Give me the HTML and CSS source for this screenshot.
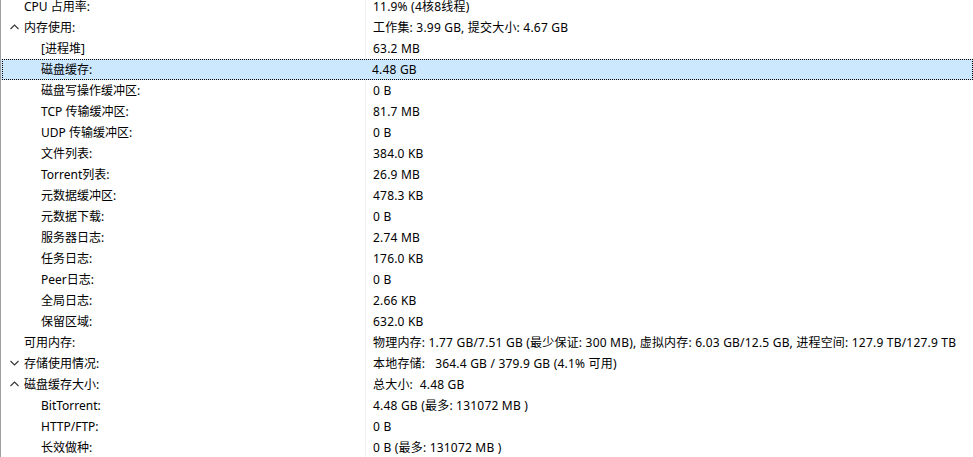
FILE: index.html
```html
<!DOCTYPE html>
<html lang="zh-CN">
<head>
  <meta charset="UTF-8" />
  <title>统计</title>
  <link rel="stylesheet" href="styles.css">
</head>
<body>
  <div class="tree">
    <div class="row"><div class="name">CPU 占用率:</div><div class="val">11.9% (4核8线程)</div></div>
    <div class="row"><div class="name"><span class="twisty"><svg width="9" height="6" viewBox="0 0 9 6"><polyline points="0.5,5 4.5,1 8.5,5" fill="none" stroke="#333" stroke-width="1.1"/></svg></span>内存使用:</div><div class="val">工作集: 3.99 GB, 提交大小: 4.67 GB</div></div>
    <div class="row"><div class="name sub">[进程堆]</div><div class="val">63.2 MB</div></div>
    <div class="row selected"><div class="focus"><div class="name sub">磁盘缓存:</div><div class="val">4.48 GB</div></div></div>
    <div class="row"><div class="name sub">磁盘写操作缓冲区:</div><div class="val">0 B</div></div>
    <div class="row"><div class="name sub">TCP 传输缓冲区:</div><div class="val">81.7 MB</div></div>
    <div class="row"><div class="name sub">UDP 传输缓冲区:</div><div class="val">0 B</div></div>
    <div class="row"><div class="name sub">文件列表:</div><div class="val">384.0 KB</div></div>
    <div class="row"><div class="name sub">Torrent列表:</div><div class="val">26.9 MB</div></div>
    <div class="row"><div class="name sub">元数据缓冲区:</div><div class="val">478.3 KB</div></div>
    <div class="row"><div class="name sub">元数据下载:</div><div class="val">0 B</div></div>
    <div class="row"><div class="name sub">服务器日志:</div><div class="val">2.74 MB</div></div>
    <div class="row"><div class="name sub">任务日志:</div><div class="val">176.0 KB</div></div>
    <div class="row"><div class="name sub">Peer日志:</div><div class="val">0 B</div></div>
    <div class="row"><div class="name sub">全局日志:</div><div class="val">2.66 KB</div></div>
    <div class="row"><div class="name sub">保留区域:</div><div class="val">632.0 KB</div></div>
    <div class="row"><div class="name">可用内存:</div><div class="val">物理内存: 1.77 GB/7.51 GB (最少保证: 300 MB), 虚拟内存: 6.03 GB/12.5 GB, 进程空间: 127.9 TB/127.9 TB</div></div>
    <div class="row"><div class="name"><span class="twisty"><svg width="9" height="6" viewBox="0 0 9 6"><polyline points="0.5,1 4.5,5 8.5,1" fill="none" stroke="#333" stroke-width="1.1"/></svg></span>存储使用情况:</div><div class="val">本地存储:&nbsp;&nbsp; 364.4 GB / 379.9 GB (4.1% 可用)</div></div>
    <div class="row"><div class="name"><span class="twisty"><svg width="9" height="6" viewBox="0 0 9 6"><polyline points="0.5,5 4.5,1 8.5,5" fill="none" stroke="#333" stroke-width="1.1"/></svg></span>磁盘缓存大小:</div><div class="val">总大小:&nbsp; 4.48 GB</div></div>
    <div class="row"><div class="name sub">BitTorrent:</div><div class="val">4.48 GB (最多: 131072 MB )</div></div>
    <div class="row"><div class="name sub">HTTP/FTP:</div><div class="val">0 B</div></div>
    <div class="row"><div class="name sub">长效做种:</div><div class="val">0 B (最多: 131072 MB )</div></div>
  </div>
</body>
</html>
```
FILE: styles.css
```css
body {
  margin: 0;
  background: #fff;
  font-family: 'Noto Sans', 'Noto Sans CJK SC', sans-serif;
  font-size: 12px;
  color: #000;
  overflow: hidden;
}

.tree {
  margin-top: -4px;
  border-left: 1px solid #a0a0a0;
  height: 470px;
  background: linear-gradient(#f0f0f0, #f0f0f0) no-repeat 364px 0 / 1px 100%;
}

.row {
  display: flex;
  height: 21px;
  line-height: 21px;
  white-space: nowrap;
  padding-left: 1px;
}

.name {
  width: 346px;
  padding-left: 22px;
  position: relative;
}

.name.sub {
  padding-left: 39px;
  width: 329px;
}

.val {
  padding-left: 3px;
  letter-spacing: 0.2px;
}

.twisty {
  position: absolute;
  left: 8px;
  top: 7px;
  line-height: 0;
}

.selected {
  background: #cce8ff;
  padding-left: 1px;
}

.focus {
  display: flex;
  flex: 1;
  border: 1px dotted #000;
  line-height: 19px;
}

.focus .name.sub {
  padding-left: 38px;
}

.focus .val {
  padding-left: 2px;
}
```
